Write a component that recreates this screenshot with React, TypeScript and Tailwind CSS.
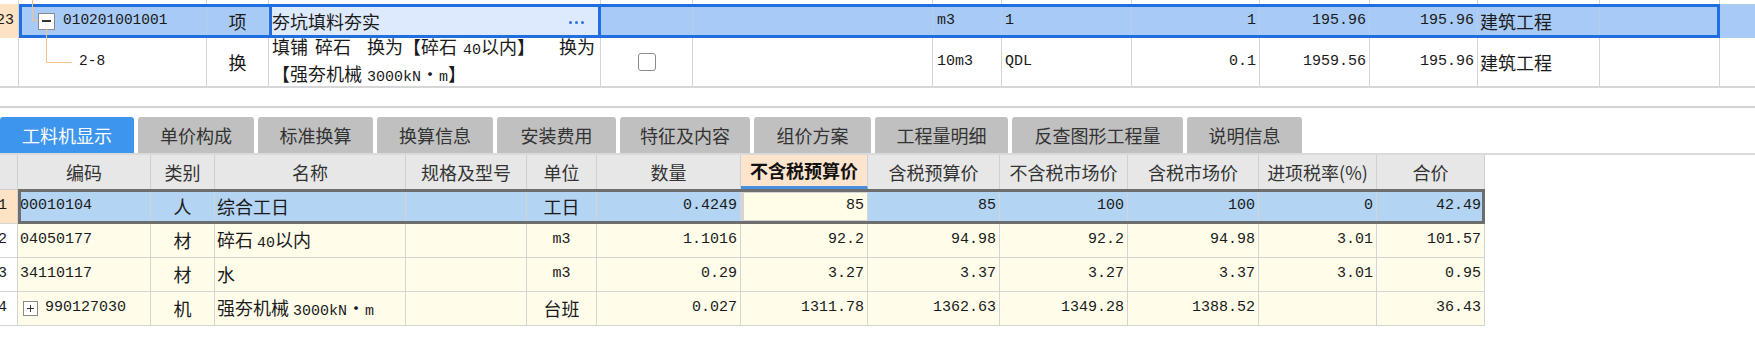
import React from 'react';

const cjk = "font-['Noto_Sans_CJK_SC',sans-serif]";
const mono = "font-['Liberation_Mono','Noto_Sans_CJK_SC',monospace]";

// top grid column widths (right border included)
const topW = [
  'w-[19px]', 'w-[188px]', 'w-[62px]', 'w-[332px]', 'w-[92px]', 'w-[240px]', 'w-[69px]',
  'w-[130px]', 'w-[128px]', 'w-[110px]', 'w-[108px]', 'w-[122px]', 'w-[120px]',
];

// bottom grid column widths
const botW = [
  'w-[18px]', 'w-[133px]', 'w-[64px]', 'w-[191px]', 'w-[121px]', 'w-[70px]', 'w-[144px]',
  'w-[127px]', 'w-[132px]', 'w-[128px]', 'w-[131px]', 'w-[118px]', 'w-[108px]',
];

const tabs = [
  { label: '工料机显示', w: 'w-[134px]' },
  { label: '单价构成', w: 'w-[116px]' },
  { label: '标准换算', w: 'w-[115px]' },
  { label: '换算信息', w: 'w-[116px]' },
  { label: '安装费用', w: 'w-[119px]' },
  { label: '特征及内容', w: 'w-[130px]' },
  { label: '组价方案', w: 'w-[117px]' },
  { label: '工程量明细', w: 'w-[133px]' },
  { label: '反查图形工程量', w: 'w-[171px]' },
  { label: '说明信息', w: 'w-[115px]' },
];

const headers = [
  '', '编码', '类别', '名称', '规格及型号', '单位', '数量', '不含税预算价', '含税预算价',
  '不含税市场价', '含税市场价', '进项税率(%)', '合价',
];

interface Item {
  code: string;
  type: string;
  name: React.ReactNode;
  unit: React.ReactNode;
  nums: string[];
  plus?: boolean;
}

const num = `${mono} text-[15px]`;

const items: Item[] = [
  { code: '00010104', type: '人', name: '综合工日', unit: '工日', nums: ['0.4249', '85', '85', '100', '100', '0', '42.49'] },
  {
    code: '04050177', type: '材',
    name: <>碎石 <span className={num}>40</span>以内</>,
    unit: <span className={num}>m3</span>,
    nums: ['1.1016', '92.2', '94.98', '92.2', '94.98', '3.01', '101.57'],
  },
  {
    code: '34110117', type: '材', name: '水',
    unit: <span className={num}>m3</span>,
    nums: ['0.29', '3.27', '3.37', '3.27', '3.37', '3.01', '0.95'],
  },
  {
    code: '990127030', type: '机', plus: true,
    name: <>强夯机械 <span className={num}>3000kN</span>・<span className={num}>m</span></>,
    unit: '台班',
    nums: ['0.027', '1311.78', '1362.63', '1349.28', '1388.52', '', '36.43'],
  },
];

const TopRemnant = () => (
  <div className="flex h-[4px]">
    {topW.map((w, i) => (
      <div key={i} className={`${w} shrink-0 border-r border-[#d4d4d4]`} />
    ))}
  </div>
);

const NumCell = ({ w, v, cls = 'border-[#d4d4d4]' }: { w: string; v: string; cls?: string }) => (
  <div className={`${w} shrink-0 h-full flex items-center justify-end pr-[3px] border-r ${num} ${cls}`}>
    {v}
  </div>
);

const TopTable = () => (
  <div className="relative">
    <TopRemnant />

    {/* selected bill row */}
    <div className="relative flex h-[34px] bg-[#a7caf6] text-[#1a1a1a]">
      <div className={`${topW[0]} shrink-0 flex items-center justify-end pr-[4px] overflow-hidden bg-[#fde2c3] border-r border-[#d4d4d4] ${mono} text-[15px]`}>
        <span className="shrink-0">23</span>
      </div>
      <div className={`${topW[1]} shrink-0 flex items-center pl-[19px] border-r border-[#b9cde8]`}>
        <div className="w-[17px] h-[17px] border border-[#8a8a8a] bg-white flex items-center justify-center">
          <div className="w-[9px] h-[1.5px] bg-[#333]" />
        </div>
        <span className={`ml-[8px] ${mono} text-[14.5px]`}>010201001001</span>
      </div>
      <div className={`${topW[2]} shrink-0 flex items-center justify-center border-r border-[#b9cde8] ${cjk} text-[18px]`}>项</div>
      <div className={`${topW[3]} shrink-0 flex items-center justify-between pl-0 pr-[14px] bg-[#dde9fc] border-[3px] border-[#1f6fe0] ${cjk} text-[18px]`}>
        <span>夯坑填料夯实</span>
        <div className="flex gap-[3px] mt-[2px]">
          <div className="w-[3px] h-[3px] rounded-full bg-[#2c6fd8]" />
          <div className="w-[3px] h-[3px] rounded-full bg-[#2c6fd8]" />
          <div className="w-[3px] h-[3px] rounded-full bg-[#2c6fd8]" />
        </div>
      </div>
      <div className={`${topW[4]} shrink-0 border-r border-[#b9cde8]`} />
      <div className={`${topW[5]} shrink-0 border-r border-[#b9cde8]`} />
      <div className={`${topW[6]} shrink-0 flex items-center pl-[4px] border-r border-[#b9cde8] ${num}`}>m3</div>
      <div className={`${topW[7]} shrink-0 flex items-center pl-[3px] border-r border-[#b9cde8] ${num}`}>1</div>
      <NumCell w={topW[8]} v="1" cls="border-[#b9cde8]" />
      <NumCell w={topW[9]} v="195.96" cls="border-[#b9cde8]" />
      <NumCell w={topW[10]} v="195.96" cls="border-[#b9cde8]" />
      <div className={`${topW[11]} shrink-0 flex items-center pl-[2px] border-r border-[#b9cde8] ${cjk} text-[18px]`}>建筑工程</div>
      <div className={`${topW[12]} shrink-0`} />
      <div className="absolute left-[19px] top-0 w-[1701px] h-[34px] border-[3px] border-[#1f6fe0] pointer-events-none" />
    </div>

    {/* sub item row */}
    <div className="flex h-[50px] border-b-2 border-[#d6d6d6] text-[#1a1a1a]">
      <div className={`${topW[0]} shrink-0 border-r border-[#d4d4d4]`} />
      <div className={`${topW[1]} shrink-0 flex items-center pl-[60px] border-r border-[#d4d4d4] ${mono} text-[14.5px]`}>2-8</div>
      <div className={`${topW[2]} shrink-0 flex items-center justify-center border-r border-[#d4d4d4] ${cjk} text-[18px]`}>换</div>
      <div className={`${topW[3]} shrink-0 flex flex-col justify-center pl-[3px] border-r border-[#d4d4d4] ${cjk} text-[18px] leading-[22px] whitespace-nowrap`}>
        <div className="flex items-baseline">
          <span>填铺</span>
          <span className="ml-[7px]">碎石</span>
          <span className="ml-[16px]">换为【碎石</span>
          <span className={`ml-[6px] ${num}`}>40</span>
          <span>以内】</span>
          <span className="ml-[24px]">换为</span>
        </div>
        <div className="flex items-baseline">
          <span>【强夯机械</span>
          <span className={`ml-[5px] ${num}`}>3000kN</span>
          <span>・</span>
          <span className={num}>m</span>
          <span>】</span>
        </div>
      </div>
      <div className={`${topW[4]} shrink-0 flex items-center justify-center border-r border-[#d4d4d4]`}>
        <div className="w-[18px] h-[18px] rounded-[3px] border border-[#8c8c8c] bg-white" />
      </div>
      <div className={`${topW[5]} shrink-0 border-r border-[#d4d4d4]`} />
      <div className={`${topW[6]} shrink-0 flex items-center pl-[4px] border-r border-[#d4d4d4] ${num}`}>10m3</div>
      <div className={`${topW[7]} shrink-0 flex items-center pl-[3px] border-r border-[#d4d4d4] ${num}`}>QDL</div>
      <NumCell w={topW[8]} v="0.1" />
      <NumCell w={topW[9]} v="1959.56" />
      <NumCell w={topW[10]} v="195.96" />
      <div className={`${topW[11]} shrink-0 flex items-center pl-[2px] border-r border-[#d4d4d4] ${cjk} text-[18px]`}>建筑工程</div>
      <div className={`${topW[12]} shrink-0 border-r border-[#d4d4d4]`} />
    </div>

    {/* tree connector lines */}
    <svg className="absolute left-0 top-0 pointer-events-none" width="90" height="90">
      <path d="M32.5 0 V20.5 H38" fill="none" stroke="#f6c38c" strokeWidth="1" />
      <path d="M46.5 29 V62.5 H72" fill="none" stroke="#f6c38c" strokeWidth="1" />
    </svg>
  </div>
);

const Tabs = () => (
  <div className="flex gap-[4px] h-[38px] border-b-2 border-[#dadada]">
    {tabs.map((t, i) => (
      <div
        key={t.label}
        className={`${t.w} shrink-0 h-[36px] rounded-t-[3px] flex items-center justify-center ${cjk} text-[18px] ${
          i === 0 ? 'bg-[#3e95ee] text-white' : 'bg-[#c0c0c0] text-[#333]'
        }`}
      >
        {t.label}
      </div>
    ))}
  </div>
);

const ResourceTable = () => (
  <div className="w-[1485px]">
    {/* header */}
    <div className="flex h-[35px] bg-[#e7e7e7] border-b border-[#d0d0d0] text-[#333]">
      {headers.map((h, i) => (
        <div
          key={i}
          className={`${botW[i]} shrink-0 flex items-center justify-center border-r border-[#d0d0d0] ${cjk} text-[18px] ${
            i === 7 ? 'bg-[#fde4cc] font-bold text-[#111] border-b-[3px] border-b-[#4a8fe0]' : ''
          }`}
        >
          {h}
        </div>
      ))}
    </div>

    {items.map((it, r) => {
      const sel = r === 0;
      const bg = sel ? 'bg-[#b3d4f2]' : 'bg-[#fffdea]';
      return (
        <div key={it.code} className="relative flex h-[34px] border-b border-[#d4d4d4] text-[#1a1a1a]">
          <div className={`${botW[0]} shrink-0 flex items-center justify-end pr-[10px] overflow-hidden border-r border-[#d4d4d4] ${sel ? 'bg-[#fde2c3]' : 'bg-white'} ${num}`}>
            <span className="shrink-0">{r + 1}</span>
          </div>
          <div className={`${botW[1]} shrink-0 flex items-center pl-[2px] border-r border-[#d4d4d4] ${bg} ${num}`}>
            {it.plus && (
              <div className="w-[15px] h-[15px] ml-[3px] mr-[7px] border border-[#8a8a8a] bg-white relative">
                <div className="absolute left-[3px] top-[6px] w-[7px] h-[1px] bg-[#333]" />
                <div className="absolute left-[6px] top-[3px] w-[1px] h-[7px] bg-[#333]" />
              </div>
            )}
            {it.code}
          </div>
          <div className={`${botW[2]} shrink-0 flex items-center justify-center border-r border-[#d4d4d4] ${bg} ${cjk} text-[18px]`}>{it.type}</div>
          <div className={`${botW[3]} shrink-0 flex items-center pl-[2px] border-r border-[#d4d4d4] whitespace-pre ${bg} ${cjk} text-[18px]`}>
            <span>{it.name}</span>
          </div>
          <div className={`${botW[4]} shrink-0 border-r border-[#d4d4d4] ${bg}`} />
          <div className={`${botW[5]} shrink-0 flex items-center justify-center border-r border-[#d4d4d4] ${bg} ${cjk} text-[18px]`}>{it.unit}</div>
          {it.nums.map((n, k) => (
            <div
              key={k}
              className={`${botW[6 + k]} shrink-0 flex items-center justify-end pr-[3px] border-r border-[#d4d4d4] ${num} ${
                sel && k === 1 ? 'bg-[#fffde8] border-[3px] border-[#6e6e6e]' : bg
              }`}
            >
              {n}
            </div>
          ))}
          {sel && (
            <div className="absolute left-[18px] top-[-1px] w-[1467px] h-[35px] border-[3px] border-[#6e6e6e] pointer-events-none" />
          )}
        </div>
      );
    })}
  </div>
);

export default function App() {
  return (
    <div className="w-[1755px] h-[361px] bg-white overflow-hidden">
      <TopTable />
      <div className="h-[18px]" />
      <div className="h-[2px] bg-[#d3d3d3]" />
      <div className="h-[9px]" />
      <Tabs />
      <ResourceTable />
    </div>
  );
}
